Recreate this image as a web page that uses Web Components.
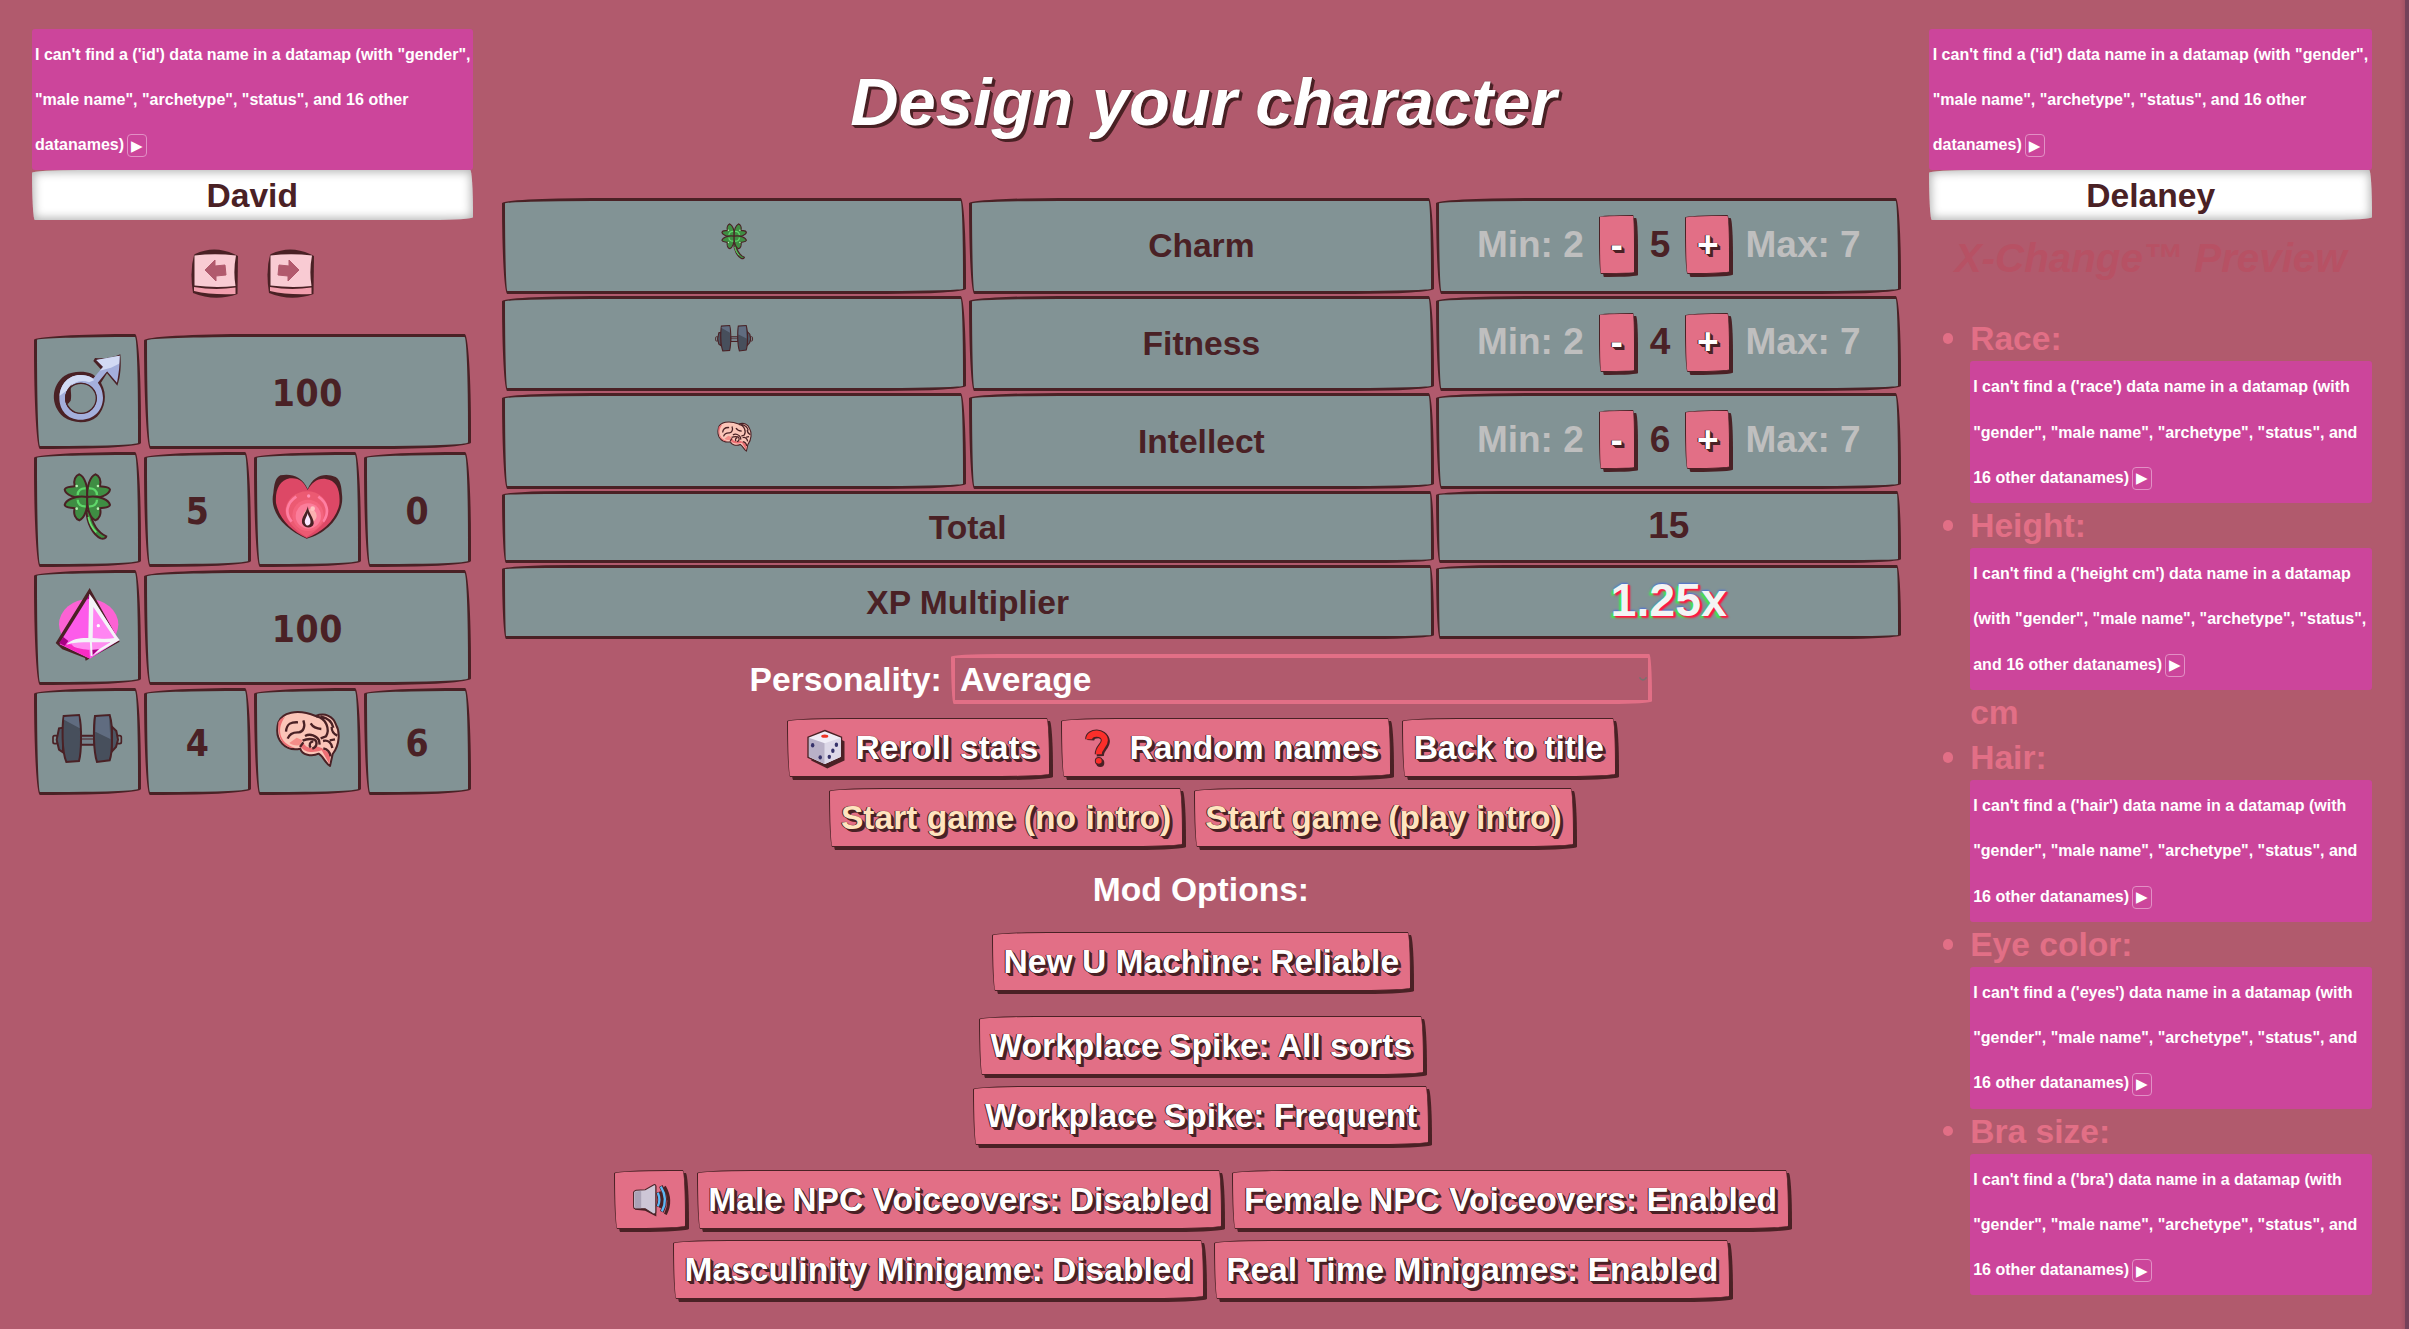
<!DOCTYPE html>
<html lang="en">
<head>
<meta charset="utf-8">
<title>Design your character</title>
<style>
  html, body {
    margin: 0;
    height: 1329px;
    overflow: hidden;
  }

  body {
    --ink: #4a2125;
    --pink: #e26f86;
    --slate: #829395;
    --wobble: 255px 15px 225px 15px / 15px 225px 15px 255px;
    background: #b15a6d;
    color: #fff;
    font: bold 33.6px/45.2px "Liberation Sans", Arial, sans-serif;
  }
</style>
</head>
<body>
<character-creator></character-creator>

<script>
const clover = () => {
    const leaf = `
      <path d="M203 534C166 540 137 524 135 510C138 500 152 503 165 500C160 482 168 467 179 464C194 470 206 500 203 534Z" fill="#3f8d43" stroke="#4a2125" stroke-width="6"/>
      <path d="M174 526C174 512 184 505 198 506" fill="none" stroke="#5fd86a" stroke-width="7"/>
      <circle cx="171" cy="499" r="4" fill="#b5f5b0"/>`;
    return `
      <path d="M200 572C202 612 220 645 243 656C252 659 260 655 260 650C238 640 218 616 211 575Z" fill="#3f8d43" stroke="#4a2125" stroke-width="6"/>
      <path d="M206 592C210 614 220 628 230 638" fill="none" stroke="#6be070" stroke-width="5"/>
      ${leaf}
      <g transform="translate(406 0) scale(-1 1)">${leaf}</g>
      <g transform="translate(0 1066) scale(1 -1)">${leaf}</g>
      <g transform="translate(406 1066) scale(-1 -1)">${leaf}</g>`;
};

// name: [viewBox, markup]
const ICONS = {
    male: ['91 93 225 225', `
      <path d="M181 155C210 155 220 162 228 170L246 151L221 123L226 114C255 117 280 113 302 103C305 135 303 170 293 197L262 160L244 188C265 225 256 265 232 290C205 313 160 311 132 291C90 255 95 195 135 167C150 158 165 155 181 155Z" fill="#4a2125"/>
      <path fill-rule="evenodd" d="M182 165C225 165 249 195 250 233C249 273 222 299 183 299C143 299 119 270 119 233C120 194 147 165 182 165ZM183 188C157 188 137 208 136 234C137 262 156 281 184 281C211 281 230 261 231 234C230 208 210 188 183 188Z" fill="#a4afdc"/>
      <path d="M120 227C122 190 150 163 184 165C205 166 216 172 225 180L208 187C185 178 160 185 148 207Z" fill="#d2daf4"/>
      <ellipse cx="184" cy="235" rx="46" ry="45" fill="#829395" stroke="#4a2125" stroke-width="4"/>
      <path d="M158 193C148 205 158 220 153 242C147 250 142 255 139 250C134 225 141 205 158 193Z" fill="#4a2125"/>
      <path d="M222 180L258 143L263 153L232 191Z" fill="#a4afdc"/>
      <path d="M300 107L230 120L250 140L220 176L230 188L262 154L292 188C297 160 301 135 300 107Z" fill="#a4afdc"/>
      <path d="M300 107L230 120L251 141L240 152L274 143L298 131Z" fill="#d2daf4"/>`],
    clover: ['91 448 225 225', clover()],
    heart: ['753 448 225 225', `
      <path d="M866 508C850 470 815 460 784 467C768 476 766 494 763 520C750 580 800 630 863 657C930 640 976 580 969 525C967 500 965 482 950 472C920 460 885 464 866 508Z" fill="#4a2125"/>
      <path d="M866 511C854 486 840 473 812 476C782 482 768 510 771 550C781 600 820 635 863 655C910 637 951 602 961 554C965 513 953 481 920 478C895 475 878 490 866 511Z" fill="#dd4866"/>
      <path d="M864 515C900 515 928 540 928 575C925 610 895 630 863 652C835 635 800 607 799 573C801 540 830 515 864 515Z" fill="#ec5a72"/>
      <path d="M832 531C803 550 796 580 818 606M898 531C926 550 932 580 912 606" fill="none" stroke="#ff7fa3" stroke-width="8"/>
      <circle cx="867" cy="587" r="47" fill="#f4647e"/>
      <circle cx="868" cy="589" r="38" fill="#fb7d9a"/>
      <circle cx="873" cy="588" r="20" fill="#fbb0b0"/>
      <circle cx="869" cy="529" r="5" fill="#ff8fb4"/><circle cx="881" cy="567" r="7" fill="#ffc2c0"/>
      <path d="M867 559C865 575 886 595 884 612C880 628 856 626 850 612C844 595 862 580 867 559Z" fill="#4a2125"/>
      <path d="M866 580C868 592 877 597 874 611C869 622 860 618 858 610C855 600 864 592 866 580Z" fill="#fbe8ff"/>`],
    crystal: ['91 798 225 225', `
      <ellipse cx="207" cy="910" rx="89" ry="76" fill="#fc62d4"/>
      <path d="M210 801L108 966L128 985L196 1011L198 1019L300 962Z" fill="#4a2125"/>
      <path d="M210 822L131 948L120 970L211 1013L298 958L291 944Z" fill="#fd5bea"/>
      <path d="M213 830L216 956L292 950Z" fill="#ff85f2"/>
      <path d="M120 968L211 1013L208 987L150 970Z" fill="#f92cc4"/>
      <path d="M131 948L118 966L135 974L146 960ZM211 818L200 836L212 832ZM214 986L238 984L216 1006Z" fill="#a80083"/>
      <ellipse cx="213" cy="969" rx="56" ry="17" fill="#ff8df0"/>
      <path d="M209 818L221 835L291 946L300 957L218 1004L240 983L272 964L205 964C180 962 155 966 140 971C155 953 185 950 206 951L208 840ZM221 858L219 951C245 954 265 954 284 951Z" fill="#f4f4f8" fill-rule="evenodd"/>
      <path d="M213 952L216 1005" stroke="#f4f4f8" stroke-width="6"/>
      <circle cx="236" cy="914" r="5" fill="#fff"/>`],
    dumbbell: ['91 1142 225 225', `
      <path d="M184 1246H224V1273H184Z" fill="#76838c" stroke="#4a2125" stroke-width="6"/>
      <path d="M184 1256H224" stroke="#4a2125" stroke-width="3"/>
      <rect x="100" y="1246" width="14" height="24" rx="5" fill="#829395" stroke="#4a2125" stroke-width="5"/>
      <rect x="291" y="1246" width="14" height="24" rx="5" fill="#829395" stroke="#4a2125" stroke-width="5"/>
      <path d="M130 1222L118 1224L111 1258L118 1288L130 1296ZM276 1218L290 1232L295 1258L289 1280L276 1294Z" fill="#4c5562" stroke="#4a2125" stroke-width="6"/>
      <path d="M132 1187L178 1184Q185 1210 184 1255Q184 1300 178 1322L140 1325Q130 1300 129 1255Q128 1210 132 1187Z" fill="#474f5c" stroke="#4a2125" stroke-width="6"/>
      <path d="M134 1190L177 1188L180 1224L133 1198Z" fill="#606c80"/>
      <path d="M226 1187L270 1184Q278 1210 277 1255Q277 1300 270 1320L232 1325Q224 1300 223 1255Q222 1210 226 1187Z" fill="#474f5c" stroke="#4a2125" stroke-width="6"/>
      <path d="M229 1190L268 1188L272 1256L227 1234Z" fill="#606c80"/>`],
    brain: ['750 1144 225 225', `
      <path d="M775 1208C785 1180 830 1165 887 1189C915 1178 940 1190 948 1215C960 1235 960 1275 938 1303L930 1339C915 1330 910 1310 896 1302C875 1312 845 1305 841 1287C800 1296 760 1265 775 1208Z" fill="#fbc5b8" stroke="#4a2125" stroke-width="6" stroke-linejoin="round"/>
      <path d="M795 1192C770 1225 775 1270 825 1284C800 1288 772 1268 775 1208C780 1198 786 1194 795 1192ZM843 1282C855 1300 880 1300 905 1292L928 1333L931 1302L905 1285L890 1280C875 1290 855 1284 850 1268Z" fill="#ee6f74"/>
      <path d="M808 1270C815 1275 830 1280 840 1276L848 1262L830 1254Z" fill="#f58d88"/>
      <g fill="none" stroke="#4a2125" stroke-width="7">
        <path d="M798 1236C800 1210 815 1207 834 1208M850 1202C857 1220 850 1237 836 1238C815 1237 806 1248 803 1257M872 1211C880 1224 890 1227 904 1228M888 1190C920 1195 930 1230 918 1250L902 1256M902 1190C925 1195 937 1210 940 1224M855 1249C870 1241 890 1247 897 1262L899 1275M848 1263C862 1256 873 1257 884 1260C894 1268 890 1283 877 1287M840 1282L850 1268M880 1266C870 1265 866 1276 872 1284M952 1248C935 1240 935 1230 935 1222M909 1264C925 1260 935 1270 937 1285M910 1286C925 1289 930 1298 932 1310M929 1262L945 1259"/>
      </g>`],
    dice: ['0 0 48 48', `
      <path d="M28 10L45 18V37L28 45L12 37Z" fill="#4a2125"/>
      <path d="M25.5 7.5L42 14V34L25.5 41.5L9 34V14Z" fill="#f0edf7" stroke="#4a2125" stroke-width="1.5"/>
      <path d="M9.7 14.5L25.5 20V40.5L9.7 33.5Z" fill="#b9b1c8"/>
      <path d="M25.5 20L41.5 14.5V33.5L25.5 40.5Z" fill="#ddd8e8"/>
      <ellipse cx="25.5" cy="13" rx="3.5" ry="1.6" fill="#ef3324"/>
      <g fill="#36326b"><ellipse cx="13.5" cy="22" rx="1.7" ry="2.2"/><ellipse cx="21" cy="34" rx="1.7" ry="2.2"/><ellipse cx="37" cy="21.5" rx="1.7" ry="2.2"/><ellipse cx="33.5" cy="27.5" rx="1.7" ry="2.2"/><ellipse cx="30" cy="33.5" rx="1.7" ry="2.2"/></g>`],
    question: ['0 0 48 48', `
      <g fill="none" stroke="#4a2125">
        <path d="M17.500 17C18 10 32 9 33 18C33 24 26.500 25 27 33" stroke-width="7"/><circle cx="27" cy="39.500" r="3" stroke-width="2" fill="#4a2125"/>
      </g>
      <path d="M16 16C16 8.500 31 8.500 31.500 17C31.500 23 25.500 24 25.500 31" fill="none" stroke="#4a2125" stroke-width="8"/>
      <path d="M16 16C16 8.500 31 8.500 31.500 17C31.500 23 25.500 24 25.500 31" fill="none" stroke="#fb2e2a" stroke-width="6"/>
      <circle cx="25.500" cy="37.500" r="3.400" fill="#fb2e2a" stroke="#4a2125"/>`],
    speaker: ['0 0 48 48', `
      <path d="M8 18L13 16L21 15.500L30 10.500V41L19 35.500L9 34.500Z" fill="#4a2125"/>
      <path d="M7.500 17Q8 15.500 10 15L19 14.500L28 9.500Q29.500 9.500 29.500 11V37Q29 39 27 38.500L19 33.500H9Q7.500 33.500 7.500 31Z" fill="#cdc6d6" stroke="#4a2125"/>
      <path d="M8.500 16.500L15 15.500V33H9Z" fill="#aaa2b6"/>
      <path d="M33.500 16.500Q38 24.500 34 32.500M38 11.500Q46 25 39 39" fill="none" stroke="#4a2125" stroke-width="3"/>
      <path d="M31.500 17Q34.500 24.500 31.500 31.500M34.500 11Q42 24 35.500 36.500" fill="none" stroke="#4a2125" stroke-width="4"/>
      <path d="M31.500 17.500Q34.500 24.500 31.500 31M34.500 11.500Q42 24 35.500 36" fill="none" stroke="#5db8f5" stroke-width="2.300"/>`],
};

class StatIcon extends HTMLElement {
    connectedCallback() {
        const [viewBox, markup] = ICONS[this.getAttribute('name')];
        this.attachShadow({mode: 'open'}).innerHTML = `
          <style>
            :host { display: block; flex: none; width: var(--icon-size, 75px); height: var(--icon-size, 75px); }
            svg { display: block; width: 100%; height: 100%; overflow: visible; }
          </style>
          <svg viewBox="${viewBox}">${markup}</svg>`;
    }
}

// Elements that are only a styled box around a slot
function defineBox(name, css, inner = '<slot></slot>') {
    const template = document.createElement('template');
    template.innerHTML = `<style>${css}</style>${inner}`;
    customElements.define(name, class extends HTMLElement {
        constructor() {
            super();
            this.attachShadow({mode: 'open'})
                .appendChild(template.content.cloneNode(true));
        }
    });
}

customElements.define('stat-icon', StatIcon);

defineBox('sketch-cell', `
  :host {
    display: flex;
    align-items: center;
    justify-content: center;
    gap: 15px;
    box-sizing: border-box;
    min-width: 0;
    background: var(--slate);
    border: 3px solid var(--ink);
    border-radius: var(--wobble);
    color: var(--ink);
  }
  :host([wide]) { grid-column: span var(--wide, 3); }
  :host([big]) { font-size: 37px; }
`);

defineBox('game-button', `
  :host {
    display: flex;
    align-items: center;
    gap: 8.3px;
    box-sizing: border-box;
    height: 59px;
    padding: 0 10.8px;
    border: 1px solid var(--ink);
    border-radius: var(--wobble);
    background: var(--pink);
    box-shadow: 3px 3px 0 var(--ink);
    color: #fff;
    font-size: var(--button-font, 33.6px);
    white-space: nowrap;
    text-shadow: 0 0 1px var(--ink), -1px 0 0 var(--ink), 1px 1px 0 var(--ink), 2px 2px 0 var(--ink), 3px 3px 0 var(--ink);
    --icon-size: 48.5px;
  }
  :host([start]) { color: #ffe4bf; }
`);

defineBox('button-row', `
  :host {
    display: flex;
    justify-content: center;
    gap: 10.6px;
    margin-bottom: 10.8px;
  }
`);

defineBox('name-field', `
  :host {
    display: flex;
    align-items: center;
    justify-content: center;
    height: 50px;
    background: #fff;
    border-radius: var(--wobble);
    box-shadow: inset 0 0 10px 2px rgba(0, 0, 0, .3);
    color: var(--ink);
    padding-top: 1px;
    box-sizing: border-box;
  }
`);

defineBox('error-box', `
  :host {
    display: block;
    padding: 3px 0 3px 3.5px;
    background: #cc459b;
    border-radius: 3px;
    color: #fff;
    font-size: 16.05px;
    white-space: nowrap;
  }
  button {
    box-sizing: border-box;
    width: 20px;
    height: 23px;
    margin: 0 0 0 3px;
    padding: 0;
    border: 1px solid #e290c5;
    border-radius: 4px;
    background: none;
    color: #fff;
    font: 15px/20px "DejaVu Sans", sans-serif;
    text-indent: -.5px;
    vertical-align: middle;
  }
`, '<slot></slot><button>▶</button>');

const BACK = 'M14 21L24 11V17L34 16L35 26L25 27V32Z';

class ArrowButton extends HTMLElement {
    connectedCallback() {
        const flip = this.hasAttribute('next') ? 'transform="translate(46 0) scale(-1 1)"' : '';
        this.attachShadow({mode: 'open'}).innerHTML = `
          <style>:host, svg { display: block; width: 47px; height: 49px; }</style>
          <svg viewBox="0 0 47 49">
            <path d="M4 5Q23 -4 43 5L47 7L46.500 45Q24 53 2 44Q-1.500 22 3 6Z" fill="#4a2125"/>
            <path d="M3.500 6.500Q24 4 45 6.500Q42 22 44.500 37Q24 39 3.500 36.500Z" fill="#f9cbd3"/>
            <path d="M3 38Q24 41.500 44.500 38.500V45Q20 46 3 42Z" fill="#f29fae"/>
            <path d="${BACK}" fill="#b15a6d" stroke="#b15a6d" stroke-linejoin="round" ${flip}/>
          </svg>`;
    }
}
customElements.define('arrow-button', ArrowButton);

class PlayerPanel extends HTMLElement {
    connectedCallback() {
        this.attachShadow({mode: 'open'}).innerHTML = `
          <style>
            :host { display: block; padding-top: 28.5px; }
            nav { display: flex; justify-content: center; gap: 29px; margin: 28.5px 0 36px; }
            .stats {
              display: grid;
              grid-template-columns: repeat(4, 1fr);
              grid-template-rows: 115.5px 115.5px 115.5px 107.5px;
              gap: 2.5px;
              margin: 0 2px 0 2.5px;
              font: bold 37px "DejaVu Sans Condensed", "DejaVu Sans", sans-serif;
              letter-spacing: .7px;
            }
            .stats sketch-cell { padding-top: 4px; }
            .stats stat-icon { margin-top: -10px; }
          </style>
          <error-box>I can't find a ('id') data name in a datamap (with "gender",<br>"male name", "archetype", "status", and 16 other<br>datanames)</error-box>
          <name-field>David</name-field>
          <nav><arrow-button></arrow-button><arrow-button next></arrow-button></nav>
          <div class="stats">
            <sketch-cell><stat-icon name="male"></stat-icon></sketch-cell>
            <sketch-cell wide>100</sketch-cell>
            <sketch-cell><stat-icon name="clover"></stat-icon></sketch-cell>
            <sketch-cell>5</sketch-cell>
            <sketch-cell><stat-icon name="heart"></stat-icon></sketch-cell>
            <sketch-cell>0</sketch-cell>
            <sketch-cell><stat-icon name="crystal"></stat-icon></sketch-cell>
            <sketch-cell wide>100</sketch-cell>
            <sketch-cell><stat-icon name="dumbbell"></stat-icon></sketch-cell>
            <sketch-cell>4</sketch-cell>
            <sketch-cell><stat-icon name="brain"></stat-icon></sketch-cell>
            <sketch-cell>6</sketch-cell>
          </div>`;
    }
}
customElements.define('player-panel', PlayerPanel);

class PreviewPanel extends HTMLElement {
    connectedCallback() {
        const fields = [
            ['Race', 'race'],
            ['Height', 'height cm', 'cm'],
            ['Hair', 'hair'],
            ['Eye color', 'eyes'],
            ['Bra size', 'bra'],
        ];
        this.attachShadow({mode: 'open'}).innerHTML = `
          <style>
            :host { display: block; padding-top: 28.5px; }
            h2 {
              margin: 16px 0 0;
              height: 80px;
              font: italic bold 40.3px/45px "Liberation Sans", Arial, sans-serif;
              color: #b75164;
              text-align: center;
              white-space: nowrap;
            }
            ul { margin: 0; padding: 0 0 0 40.5px; list-style: none; color: var(--pink); }
            .label { display: flex; align-items: center; margin-left: -27px; }
            .label::before {
              content: "";
              width: 10.5px;
              height: 10.5px;
              margin-right: 17px;
              border-radius: 50%;
              background: currentColor;
            }
            .unit { padding-left: .5px; }
          </style>
          <error-box>I can't find a ('id') data name in a datamap (with "gender",<br>"male name", "archetype", "status", and 16 other<br>datanames)</error-box>
          <name-field>Delaney</name-field>
          <h2>X-Change™ Preview</h2>
          <ul>
            ${fields.map(([label, key, unit]) => `
              <li>
                <div class="label">${label}:</div>
                <error-box>I can't find a ('${key}') data name in a datamap${unit
                    ? '<br>(with "gender", "male name", "archetype", "status",<br>and 16 other datanames)'
                    : ' (with<br>"gender", "male name", "archetype", "status", and<br>16 other datanames)'}</error-box>
                ${unit ? `<div class="unit">${unit}</div>` : ''}
              </li>`).join('')}
          </ul>`;
    }
}
customElements.define('preview-panel', PreviewPanel);

class StatTable extends HTMLElement {
    connectedCallback() {
        const stats = [
            ['clover', 'Charm', 5],
            ['dumbbell', 'Fitness', 4],
            ['brain', 'Intellect', 6],
        ];
        this.attachShadow({mode: 'open'}).innerHTML = `
          <style>
            :host {
              display: grid;
              grid-template-columns: repeat(3, 1fr);
              grid-template-rows: 96px 95.3px 96px 72px 74.3px;
              gap: 2px 2.6px;
              --wide: 2;
              --icon-size: 40.5px;
              --button-font: 37px;
            }
            stat-icon { margin: -10px 0 0 1px; }
            .limit { color: #bfbfbf; }
            sketch-cell[big] { padding-bottom: 3px; }
            .xp {
              color: #f4f4f4;
              font-size: 46.5px;
              text-shadow: 2px 1.5px 2px #ff1744, 2px 1px 1px #ff1744, -2px 2px 2px #3bf04a, 0 -1px 2px #4a6fd8;
            }
          </style>
          ${stats.map(([icon, name, value]) => `
            <sketch-cell><stat-icon name="${icon}"></stat-icon></sketch-cell>
            <sketch-cell>${name}</sketch-cell>
            <sketch-cell big>
              <span class="limit">Min: 2</span>
              <game-button>-</game-button>
              <span>${value}</span>
              <game-button>+</game-button>
              <span class="limit">Max: 7</span>
            </sketch-cell>`).join('')}
          <sketch-cell wide>Total</sketch-cell><sketch-cell big>15</sketch-cell>
          <sketch-cell wide>XP Multiplier</sketch-cell><sketch-cell big><span class="xp">1.25x</span></sketch-cell>`;
    }
}
customElements.define('stat-table', StatTable);

class PersonalitySelect extends HTMLElement {
    connectedCallback() {
        this.attachShadow({mode: 'open'}).innerHTML = `
          <style>
            :host { display: flex; align-items: center; justify-content: center; gap: 9.3px; margin: 15px 1px 13.5px 0; }
            .select {
              display: flex;
              align-items: center;
              justify-content: space-between;
              box-sizing: border-box;
              width: 701px;
              height: 50px;
              padding: 0 1.5px 0 5px;
              border: 4px solid var(--pink);
              border-radius: var(--wobble);
            }
            svg { width: 8px; height: 6px; }
          </style>
          <span>Personality:</span>
          <div class="select">Average
            <svg viewBox="0 0 8 6"><path d="M.500 1.500Q4 6.500 7.500 1.500" fill="none" stroke="#75736f" stroke-width="1.500"/></svg>
          </div>`;
    }
}
customElements.define('personality-select', PersonalitySelect);

class CharacterCreator extends HTMLElement {
    connectedCallback() {
        this.attachShadow({mode: 'open'}).innerHTML = `
          <style>
            :host {
              display: grid;
              grid-template-columns: 441.5px 1399.7px 442.5px;
              column-gap: 28.5px;
              box-sizing: border-box;
              height: 1329px;
              padding-left: 31.5px;
              border-right: 4px solid #74415a;
              background: linear-gradient(to left, #a35265, transparent 5px);
            }
            h1 {
              margin: 0 0 50.5px;
              padding: 57.4px 0 0 4px;
              font: italic bold 66.9px/90px "Liberation Sans", Arial, sans-serif;
              text-align: center;
              text-shadow: 0 0 1px var(--ink), 1px 1px 0 var(--ink), 2px 2px 0 var(--ink), 3px 3px 0 var(--ink);
            }
            main { white-space: nowrap; }
            .mods { margin: 20.5px 1px 19.7px 0; text-align: center; }
            .gap { margin-bottom: 25px; }
            preview-panel { margin-left: -.5px; }
          </style>
          <player-panel></player-panel>
          <main>
            <h1>Design your character</h1>
            <stat-table></stat-table>
            <personality-select></personality-select>
            <button-row>
              <game-button><stat-icon name="dice"></stat-icon>Reroll stats</game-button>
              <game-button><stat-icon name="question"></stat-icon>Random names</game-button>
              <game-button>Back to title</game-button>
            </button-row>
            <button-row>
              <game-button start>Start game (no intro)</game-button>
              <game-button start>Start game (play intro)</game-button>
            </button-row>
            <div class="mods">Mod Options:</div>
            <button-row class="gap"><game-button>New U Machine: Reliable</game-button></button-row>
            <button-row><game-button>Workplace Spike: All sorts</game-button></button-row>
            <button-row class="gap"><game-button>Workplace Spike: Frequent</game-button></button-row>
            <button-row>
              <game-button><stat-icon name="speaker"></stat-icon></game-button>
              <game-button>Male NPC Voiceovers: Disabled</game-button>
              <game-button>Female NPC Voiceovers: Enabled</game-button>
            </button-row>
            <button-row>
              <game-button>Masculinity Minigame: Disabled</game-button>
              <game-button>Real Time Minigames: Enabled</game-button>
            </button-row>
          </main>
          <preview-panel></preview-panel>`;
    }
}
customElements.define('character-creator', CharacterCreator);
</script>
</body>
</html>
